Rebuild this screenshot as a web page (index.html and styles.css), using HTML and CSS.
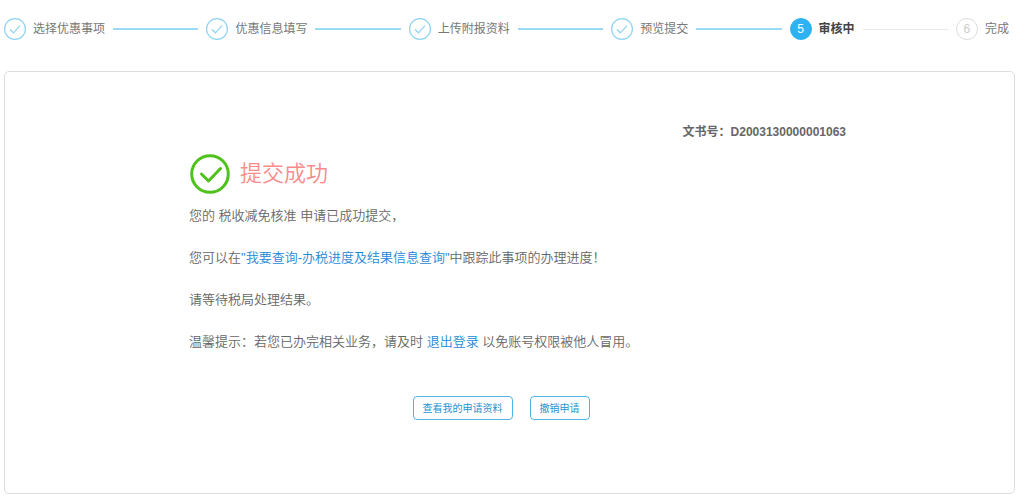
FILE: index.html
```html
<!doctype html>
<html lang="zh-CN">

	<head>

		<meta charset="utf-8">
		<meta name="viewport" content="width=device-width, initial-scale=1.0">
		<title>提交成功</title>

		<link rel="stylesheet" href="styles.css">

	</head>

	<body>

		<ol class="steps">
			<li class="step done">
				<svg class="step-icon" viewBox="0 0 22 22"><circle cx="11" cy="11" r="10.4"/><path d="M6 11.5l3.4 3.3L16 7.6"/></svg>
				<span class="step-title">选择优惠事项</span>
			</li>
			<li class="step done">
				<svg class="step-icon" viewBox="0 0 22 22"><circle cx="11" cy="11" r="10.4"/><path d="M6 11.5l3.4 3.3L16 7.6"/></svg>
				<span class="step-title">优惠信息填写</span>
			</li>
			<li class="step done">
				<svg class="step-icon" viewBox="0 0 22 22"><circle cx="11" cy="11" r="10.4"/><path d="M6 11.5l3.4 3.3L16 7.6"/></svg>
				<span class="step-title">上传附报资料</span>
			</li>
			<li class="step done">
				<svg class="step-icon" viewBox="0 0 22 22"><circle cx="11" cy="11" r="10.4"/><path d="M6 11.5l3.4 3.3L16 7.6"/></svg>
				<span class="step-title">预览提交</span>
			</li>
			<li class="step current" aria-current="step">
				<span class="step-number">5</span>
				<span class="step-title">审核中</span>
			</li>
			<li class="step">
				<span class="step-number">6</span>
				<span class="step-title">完成</span>
			</li>
		</ol>

		<main class="panel">

			<div class="result">

				<p class="doc-number">文书号：D2003130000001063</p>

				<div class="result-head">
					<svg class="result-icon" viewBox="0 0 42 42"><circle cx="21" cy="21" r="18.3"/><path d="M12.500 21l7 7L31.500 15.500"/></svg>
					<h1 class="result-title">提交成功</h1>
				</div>

				<p class="message">您的 税收减免核准 申请已成功提交，</p>
				<p class="message">您可以在<a href="#">"我要查询-办税进度及结果信息查询"</a>中跟踪此事项的办理进度！</p>
				<p class="message">请等待税局处理结果。</p>
				<p class="message">温馨提示：若您已办完相关业务，请及时 <a href="#">退出登录</a> 以免账号权限被他人冒用。</p>

			</div>

			<div class="actions">
				<button class="btn" type="button">查看我的申请资料</button>
				<button class="btn" type="button">撤销申请</button>
			</div>

		</main>

	</body>

</html>
```
FILE: styles.css
```css
html, body {
	margin: 0; padding: 0;
}

body {
	box-sizing: border-box;
	padding: 18px 18px 6px 4px;
	background-color: #fff;
	color: #666;
	font-family: "Liberation Sans", "Noto Sans CJK SC", sans-serif;
	font-size: 13px;
}

/* step bar */
.steps {
	display: flex;
	margin: 0 0 31px;
	padding: 0 6px 0 0;
	list-style: none;
}

.step {
	display: flex;
	flex: 1 1 auto;
	align-items: center;
}

.step:last-child {
	flex: none;
}

/* connecting line to the next step */
.step:not(:last-child)::after {
	content: "";
	flex: 1;
	height: 1px;
	margin: 0 8px;
	background-color: #e8e8e8;
}

.step.done:not(:last-child)::after {
	height: 2px;
	background-color: #9bdaf3;
}

.step-icon {
	width: 22px;
	height: 22px;
	fill: none;
	stroke: #8fd3f2;
	stroke-width: 1.2;
}

.step-number {
	box-sizing: border-box;
	width: 22px;
	height: 22px;
	border: 1px solid #ddd;
	border-radius: 50%;
	color: #ccc;
	font-size: 12px;
	line-height: 20px;
	text-align: center;
}

.current .step-number {
	border-color: #2db3f1;
	background-color: #2db3f1;
	color: #fff;
}

.step-title {
	margin-left: 7px;
	color: #777;
	font-size: 12px;
	line-height: 22px;
}

.current .step-title {
	color: #444;
	font-weight: bold;
}

/* result panel */
.panel {
	padding: 51px 0 73px;
	border: 1px solid #ddd;
	border-radius: 5px;
}

.result {
	padding: 0 168px 0 184px;
}

.doc-number {
	margin: 0;
	font-size: 12px;
	font-weight: bold;
	line-height: 18px;
	text-align: right;
}

.result-head {
	display: flex;
	align-items: center;
	gap: 9px;
	margin: 12px 0 0;
}

.result-icon {
	width: 42px;
	height: 42px;
	fill: none;
	stroke: #4fc21c;
	stroke-width: 3;
	stroke-linecap: round;
	stroke-linejoin: round;
}

.result-title {
	margin: 0;
	color: #f98b8b;
	font-size: 22px;
	font-weight: 350;
	line-height: 42px;
}

.message {
	margin: 0;
	font-weight: 350;
	line-height: 42px;
}

.message a {
	color: #1e87d6;
	text-decoration: none;
}

/* the trailing margin of the last button is part of the centered row */
.actions {
	display: flex;
	justify-content: center;
	margin-top: 33px;
}

.btn {
	height: 24px;
	margin: 0 17px 0 0;
	padding: 0 9px 2px;
	border: 1px solid #4fb4e8;
	border-radius: 4px;
	background-color: #fff;
	color: #1d93d2;
	font-family: inherit;
	font-size: 10px;
	cursor: pointer;
}
```
